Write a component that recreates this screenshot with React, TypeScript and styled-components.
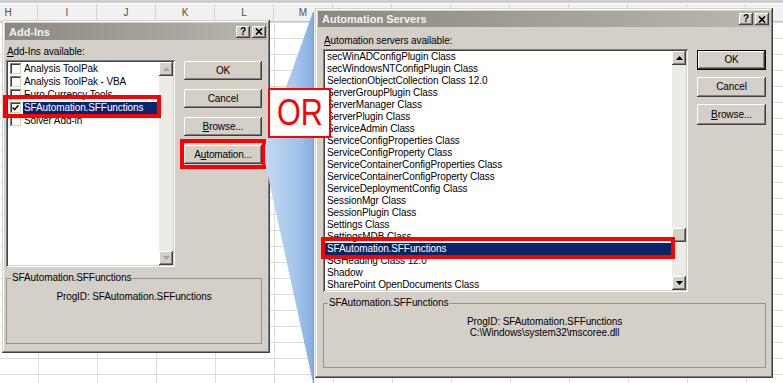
import styled, { createGlobalStyle } from 'styled-components';

const GlobalStyle = createGlobalStyle`
  html, body {
    margin: 0;
    padding: 0;
  }
  body {
    width: 783px;
    height: 383px;
    overflow: hidden;
    background: #fff;
    font-family: "Liberation Sans", Arial, sans-serif;
  }
`;

// only the headers that show past the dialogs get a letter
const columns = ['H', 'I', 'J', 'K', 'L', 'M', '', '', '', '', '', '', '', ''];

const addIns = [
  { label: 'Analysis ToolPak', checked: false, selected: false },
  { label: 'Analysis ToolPak - VBA', checked: false, selected: false },
  { label: 'Euro Currency Tools', checked: false, selected: false },
  { label: 'SFAutomation.SFFunctions', checked: true, selected: true },
  { label: 'Solver Add-in', checked: false, selected: false },
];

const servers = [
  'secWinADConfigPlugin Class',
  'secWindowsNTConfigPlugin Class',
  'SelectionObjectCollection Class 12.0',
  'ServerGroupPlugin Class',
  'ServerManager Class',
  'ServerPlugin Class',
  'ServiceAdmin Class',
  'ServiceConfigProperties Class',
  'ServiceConfigProperty Class',
  'ServiceContainerConfigProperties Class',
  'ServiceContainerConfigProperty Class',
  'ServiceDeploymentConfig Class',
  'SessionMgr Class',
  'SessionPlugin Class',
  'Settings Class',
  'SettingsMDB Class',
  'SFAutomation.SFFunctions',
  'SGHeading Class 12.0',
  'Shadow',
  'SharePoint OpenDocuments Class',
];

const Canvas = styled.div`
  position: relative;
  width: 783px;
  height: 383px;
  overflow: hidden;
  background: #fff;
`;

/* excel sheet behind the dialogs */
const Sheet = styled.div`
  display: flex;
  flex-direction: column;
  height: 100%;
`;

const TopStrip = styled.div`
  height: 3px;
  flex: none;
  background: #cdcdcd;
  border-bottom: 1px solid #fff;
`;

const HeaderRow = styled.div`
  flex: none;
  display: grid;
  grid-template-columns: repeat(14, 59px);
  margin-left: -21px;
  height: 17px;
  background: #f1f1f1;
  border-bottom: 1px solid #c6c6c6;
`;

const HeaderCell = styled.div`
  display: flex;
  align-items: center;
  justify-content: center;
  border-right: 1px solid #d2d2d2;
  font-size: 10px;
  color: #4d4d4d;
`;

const Cells = styled.div`
  flex: 1;
  background-color: #fff;
  background-image: linear-gradient(to right, #dcdcdc 1px, transparent 1px),
    linear-gradient(to bottom, #dcdcdc 1px, transparent 1px);
  background-size: 59px 16px, 59px 16px;
  background-position: 38px 0, 0 0;
`;

/* classic dialog window */
const Window = styled.section<{ $x: number; $y: number; $w: number; $h: number }>`
  position: absolute;
  left: ${({ $x }) => $x}px;
  top: ${({ $y }) => $y}px;
  width: ${({ $w }) => $w}px;
  height: ${({ $h }) => $h}px;
  box-sizing: border-box;
  padding: 3px;
  display: flex;
  flex-direction: column;
  background: #d4d0c8;
  box-shadow: inset -1px -1px #404040, inset 1px 1px #d4d0c8, inset -2px -2px #808080,
    inset 2px 2px #fff;
  font: 10px/12px "Liberation Sans", Arial, sans-serif;
  letter-spacing: -0.1px;
  color: #000;
`;

const TitleBar = styled.header<{ $h: number }>`
  flex: none;
  height: ${({ $h }) => $h}px;
  display: flex;
  align-items: center;
  justify-content: space-between;
  padding: 0 1px 0 4px;
  background: linear-gradient(to right, #8b8882, #bab7b0);
`;

const TitleText = styled.span`
  font-weight: bold;
  font-size: 11px;
  letter-spacing: 0;
  color: #f2f2f2;
`;

const CaptionButtons = styled.div`
  display: flex;
  gap: 2px;
`;

const CaptionButton = styled.span`
  width: 14px;
  height: 12px;
  box-sizing: border-box;
  display: flex;
  align-items: center;
  justify-content: center;
  background: #d4d0c8;
  box-shadow: inset -1px -1px #404040, inset 1px 1px #fff, inset -2px -2px #808080;
  font-weight: bold;
  font-size: 10px;
  line-height: 1;
`;

const DialogBody = styled.div<{ $list: number; $buttons: number; $listH: number; $top: number; $left: number }>`
  display: grid;
  grid-template-columns: ${({ $list }) => $list}px ${({ $buttons }) => $buttons}px;
  grid-template-rows: 12px ${({ $listH }) => $listH}px auto;
  grid-template-areas:
    'label .'
    'list buttons'
    'group group';
  column-gap: 9px;
  row-gap: 2px;
  padding: ${({ $top }) => $top}px 0 0 ${({ $left }) => $left}px;
`;

const FieldLabel = styled.div`
  grid-area: label;
  padding-left: 1px;
  white-space: nowrap;
`;

const ListBox = styled.div`
  grid-area: list;
  display: flex;
  box-sizing: border-box;
  padding: 2px;
  background: #fff;
  box-shadow: inset 1px 1px #808080, inset -1px -1px #fff, inset 2px 2px #404040,
    inset -2px -2px #d4d0c8;
`;

const Items = styled.div`
  flex: 1;
  display: flex;
  flex-direction: column;
`;

const CheckRow = styled.div<{ $selected: boolean }>`
  position: relative;
  height: 13px;
  display: flex;
  align-items: center;
  gap: 2px;
  padding-left: 2px;
  margin-right: 2px;
  white-space: nowrap;

  ${({ $selected }) =>
    $selected &&
    `
    z-index: 1;
    &::after {
      content: '';
      position: absolute;
      top: -6px;
      bottom: -4px;
      left: -5px;
      right: -4px;
      border: 4px solid #f00;
    }
  `}
`;

const CheckBox = styled.span`
  flex: none;
  width: 11px;
  height: 11px;
  box-sizing: border-box;
  display: flex;
  align-items: center;
  justify-content: center;
  background: #fff;
  box-shadow: inset 1px 1px #808080, inset -1px -1px #d4d0c8, inset 2px 2px #404040;
`;

const ItemText = styled.span<{ $selected: boolean }>`
  flex: 1;
  height: 12px;
  padding-left: 1px;
  background: ${({ $selected }) => ($selected ? '#0a246a' : 'transparent')};
  color: ${({ $selected }) => ($selected ? '#fff' : '#000')};
`;

const ServerRow = styled.div<{ $selected: boolean }>`
  position: relative;
  height: 12px;
  flex: none;
  padding-left: 2px;
  white-space: nowrap;
  background: ${({ $selected }) => ($selected ? '#0a246a' : 'transparent')};
  color: ${({ $selected }) => ($selected ? '#fff' : '#000')};

  ${({ $selected }) =>
    $selected &&
    `
    z-index: 1;
    &::after {
      content: '';
      position: absolute;
      top: -6px;
      bottom: -4px;
      left: -4px;
      right: -3px;
      border: 4px solid #f00;
    }
  `}
`;

const ScrollBar = styled.div`
  flex: none;
  width: 14px;
  display: flex;
  flex-direction: column;
  background: #ecebe6;
`;

const ScrollArrow = styled.span`
  flex: none;
  width: 14px;
  height: 14px;
  box-sizing: border-box;
  display: flex;
  align-items: center;
  justify-content: center;
  background: #d4d0c8;
  box-shadow: inset -1px -1px #404040, inset 1px 1px #fff, inset -2px -2px #808080;
`;

const ScrollTrack = styled.div`
  flex: 1;
  display: flex;
  flex-direction: column;
`;

const ScrollThumb = styled.span<{ $offset: number }>`
  width: 14px;
  height: 14px;
  margin-top: ${({ $offset }) => $offset}px;
  box-sizing: border-box;
  background: #d4d0c8;
  box-shadow: inset -1px -1px #404040, inset 1px 1px #fff, inset -2px -2px #808080;
`;

const ButtonColumn = styled.div<{ $gap: number }>`
  grid-area: buttons;
  display: flex;
  flex-direction: column;
  gap: ${({ $gap }) => $gap}px;
  padding-top: 1px;
`;

const PushButton = styled.div<{ $h: number; $default?: boolean }>`
  position: relative;
  height: ${({ $h }) => $h}px;
  box-sizing: border-box;
  display: flex;
  align-items: center;
  justify-content: center;
  background: #d4d0c8;
  box-shadow: ${({ $default }) =>
    $default
      ? 'inset 0 0 0 1px #000, inset -2px -2px #404040, inset 2px 2px #fff, inset -3px -3px #808080'
      : 'inset -1px -1px #404040, inset 1px 1px #fff, inset -2px -2px #808080'};
`;

const Highlighted = styled.div`
  position: relative;
  &::after {
    content: '';
    position: absolute;
    top: -6px;
    bottom: -5px;
    left: -4px;
    right: -4px;
    border: 4px solid #f00;
  }
`;

const GroupBox = styled.fieldset<{ $h: number }>`
  grid-area: group;
  min-width: 0;
  height: ${({ $h }) => $h}px;
  box-sizing: border-box;
  margin: 3px 0 0;
  padding: 0;
  border: 1px solid #95928b;
`;

const GroupLegend = styled.legend`
  margin-left: 4px;
  padding: 0 1px;
  line-height: 12px;
`;

const GroupText = styled.div`
  padding-top: 7px;
  text-align: center;
  line-height: 11px;
`;

/* callouts */
const Wedge = styled.svg`
  position: absolute;
  left: 0;
  top: 0;
  pointer-events: none;
`;

const OrCallout = styled.div`
  position: absolute;
  left: 268px;
  top: 88px;
  width: 63px;
  height: 50px;
  box-sizing: border-box;
  display: flex;
  align-items: center;
  justify-content: center;
  border: 2px solid #f00;
  background: #fff;
  font: 36px/1 "Liberation Sans", Arial, sans-serif;
  color: #f00;
`;

const OrText = styled.span`
  display: inline-block;
  transform: scaleX(0.85);
`;

const Arrow = ({ down, disabled }: { down?: boolean; disabled?: boolean }) => (
  <svg width="7" height="4" viewBox="0 0 7 4">
    <polygon
      points={down ? '0,0 7,0 3.5,4' : '3.5,0 7,4 0,4'}
      fill={disabled ? '#a6a39c' : '#000'}
    />
  </svg>
);

const CloseGlyph = () => (
  <svg width="8" height="7" viewBox="0 0 8 7">
    <path d="M1 0.5 L7 6.5 M7 0.5 L1 6.5" stroke="#000" strokeWidth="1.6" />
  </svg>
);

const CheckGlyph = () => (
  <svg width="7" height="7" viewBox="0 0 7 7">
    <path d="M0.5 3.5 L2.6 5.6 L6.5 1.2" stroke="#000" strokeWidth="1.5" fill="none" />
  </svg>
);

const Caption = ({ title, h }: { title: string; h: number }) => (
  <TitleBar $h={h}>
    <TitleText>{title}</TitleText>
    <CaptionButtons>
      <CaptionButton>?</CaptionButton>
      <CaptionButton>
        <CloseGlyph />
      </CaptionButton>
    </CaptionButtons>
  </TitleBar>
);

const AddInsDialog = () => (
  <Window $x={2} $y={20} $w={268} $h={333}>
    <Caption title="Add-Ins" h={17} />
    <DialogBody $list={169} $buttons={78} $listH={207} $top={6} $left={1}>
      <FieldLabel>
        <u>A</u>dd-Ins available:
      </FieldLabel>
      <ListBox>
        <Items>
          {addIns.map((item) => (
            <CheckRow key={item.label} $selected={item.selected}>
              <CheckBox>{item.checked && <CheckGlyph />}</CheckBox>
              <ItemText $selected={item.selected}>{item.label}</ItemText>
            </CheckRow>
          ))}
        </Items>
        <ScrollBar>
          <ScrollArrow>
            <Arrow disabled />
          </ScrollArrow>
          <ScrollTrack />
          <ScrollArrow>
            <Arrow down disabled />
          </ScrollArrow>
        </ScrollBar>
      </ListBox>
      <ButtonColumn $gap={9}>
        <PushButton $h={19}>OK</PushButton>
        <PushButton $h={19}>Cancel</PushButton>
        <PushButton $h={19}>
          <span>
            <u>B</u>rowse...
          </span>
        </PushButton>
        <Highlighted>
          <PushButton $h={19}>
            <span>
              A<u>u</u>tomation...
            </span>
          </PushButton>
        </Highlighted>
      </ButtonColumn>
      <GroupBox $h={72}>
        <GroupLegend>SFAutomation.SFFunctions</GroupLegend>
        <GroupText>ProgID: SFAutomation.SFFunctions</GroupText>
      </GroupBox>
    </DialogBody>
  </Window>
);

const ServersDialog = () => (
  <Window $x={315} $y={8} $w={458} $h={370}>
    <Caption title="Automation Servers" h={16} />
    <DialogBody $list={365} $buttons={69} $listH={243} $top={8} $left={5}>
      <FieldLabel>
        <u>A</u>utomation servers available:
      </FieldLabel>
      <ListBox>
        <Items>
          {servers.map((name) => (
            <ServerRow key={name} $selected={name === 'SFAutomation.SFFunctions'}>
              {name}
            </ServerRow>
          ))}
        </Items>
        <ScrollBar>
          <ScrollArrow>
            <Arrow />
          </ScrollArrow>
          <ScrollTrack>
            <ScrollThumb $offset={163} />
          </ScrollTrack>
          <ScrollArrow>
            <Arrow down />
          </ScrollArrow>
        </ScrollBar>
      </ListBox>
      <ButtonColumn $gap={7}>
        <PushButton $h={20} $default>
          OK
        </PushButton>
        <PushButton $h={20}>Cancel</PushButton>
        <PushButton $h={21}>
          <span>
            <u>B</u>rowse...
          </span>
        </PushButton>
      </ButtonColumn>
      <GroupBox $h={71}>
        <GroupLegend>SFAutomation.SFFunctions</GroupLegend>
        <GroupText>
          ProgID: SFAutomation.SFFunctions
          <br />
          C:\Windows\system32\mscoree.dll
        </GroupText>
      </GroupBox>
    </DialogBody>
  </Window>
);

export default function App() {
  return (
    <>
      <GlobalStyle />
      <Canvas>
        <Sheet>
          <TopStrip />
          <HeaderRow>
            {columns.map((c, i) => (
              <HeaderCell key={i}>{c}</HeaderCell>
            ))}
          </HeaderRow>
          <Cells />
        </Sheet>
        <AddInsDialog />
        <Wedge width="783" height="383" viewBox="0 0 783 383">
          <defs>
            <linearGradient id="wedgeFill" x1="265" y1="0" x2="314" y2="0" gradientUnits="userSpaceOnUse">
              <stop offset="0" stopColor="#c3d9f3" />
              <stop offset="0.65" stopColor="#a3c4eb" />
              <stop offset="1" stopColor="#82addf" />
            </linearGradient>
          </defs>
          <polygon points="313,12 265,146 265,162 313,383" fill="url(#wedgeFill)" />
          <line x1="313.5" y1="12" x2="313.5" y2="383" stroke="#6e9ed8" strokeWidth="1" />
        </Wedge>
        <ServersDialog />
        <OrCallout>
          <OrText>OR</OrText>
        </OrCallout>
      </Canvas>
    </>
  );
}
